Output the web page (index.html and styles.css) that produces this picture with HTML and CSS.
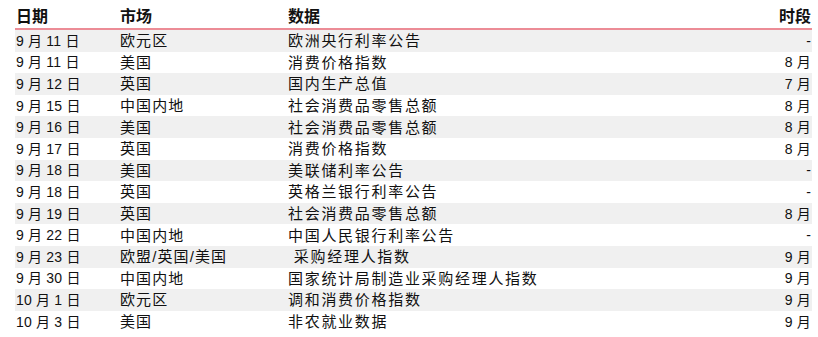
FILE: index.html
```html
<!DOCTYPE html>
<html lang="zh">
<head>
<meta charset="utf-8">
<link rel="stylesheet" href="styles.css">
</head>
<body>
<div class="table">
  <div class="row head">
    <div class="c date">日期</div><div class="c mkt">市场</div><div class="c data">数据</div><div class="c per">时段</div>
  </div>
  <div class="row"><div class="c date">9 月 11 日</div><div class="c mkt">欧元区</div><div class="c data">欧洲央行利率公告</div><div class="c per">-</div></div>
  <div class="row"><div class="c date">9 月 11 日</div><div class="c mkt">美国</div><div class="c data">消费价格指数</div><div class="c per">8 月</div></div>
  <div class="row"><div class="c date">9 月 12 日</div><div class="c mkt">英国</div><div class="c data">国内生产总值</div><div class="c per">7 月</div></div>
  <div class="row"><div class="c date">9 月 15 日</div><div class="c mkt">中国内地</div><div class="c data">社会消费品零售总额</div><div class="c per">8 月</div></div>
  <div class="row"><div class="c date">9 月 16 日</div><div class="c mkt">美国</div><div class="c data">社会消费品零售总额</div><div class="c per">8 月</div></div>
  <div class="row"><div class="c date">9 月 17 日</div><div class="c mkt">英国</div><div class="c data">消费价格指数</div><div class="c per">8 月</div></div>
  <div class="row"><div class="c date">9 月 18 日</div><div class="c mkt">美国</div><div class="c data">美联储利率公告</div><div class="c per">-</div></div>
  <div class="row"><div class="c date">9 月 18 日</div><div class="c mkt">英国</div><div class="c data">英格兰银行利率公告</div><div class="c per">-</div></div>
  <div class="row"><div class="c date">9 月 19 日</div><div class="c mkt">英国</div><div class="c data">社会消费品零售总额</div><div class="c per">8 月</div></div>
  <div class="row"><div class="c date">9 月 22 日</div><div class="c mkt">中国内地</div><div class="c data">中国人民银行利率公告</div><div class="c per">-</div></div>
  <div class="row"><div class="c date">9 月 23 日</div><div class="c mkt">欧盟/英国/美国</div><div class="c data">&nbsp;采购经理人指数</div><div class="c per">9 月</div></div>
  <div class="row"><div class="c date">9 月 30 日</div><div class="c mkt">中国内地</div><div class="c data">国家统计局制造业采购经理人指数</div><div class="c per">9 月</div></div>
  <div class="row"><div class="c date">10 月 1 日</div><div class="c mkt">欧元区</div><div class="c data">调和消费价格指数</div><div class="c per">9 月</div></div>
  <div class="row"><div class="c date">10 月 3 日</div><div class="c mkt">美国</div><div class="c data">非农就业数据</div><div class="c per">9 月</div></div>
</div>
</body>
</html>
```
FILE: styles.css
```css
html, body { margin: 0; padding: 0; background: #fff; }
body {
  font-family: "Liberation Sans", "Noto Sans CJK SC", sans-serif;
  color: #111;
}
.table {
  margin-left: 15px;
  width: 797px;
  display: flex;
  flex-direction: column;
}
.row {
  display: grid;
  grid-template-columns: 104px 168px 1fr 80px;
  height: 21.6px;
  align-items: center;
  font-size: 15px;
  white-space: nowrap;
}
.row:nth-child(even) { background: #f0f0f0; }
.c { padding-left: 1px; line-height: 1; }
.mkt { letter-spacing: 1.1px; }
.data { letter-spacing: 1.7px; }
.date, .per { font-size: 14px; letter-spacing: 0.2px; }
.per { text-align: right; padding-right: 1px; }
.head {
  border-bottom: 2px solid #ec8c96;
  font-weight: bold;
  align-items: end;
  padding-bottom: 3px;
  box-sizing: border-box;
  height: 30px;
}
.head .c { font-size: 16px; letter-spacing: 0; }
```
